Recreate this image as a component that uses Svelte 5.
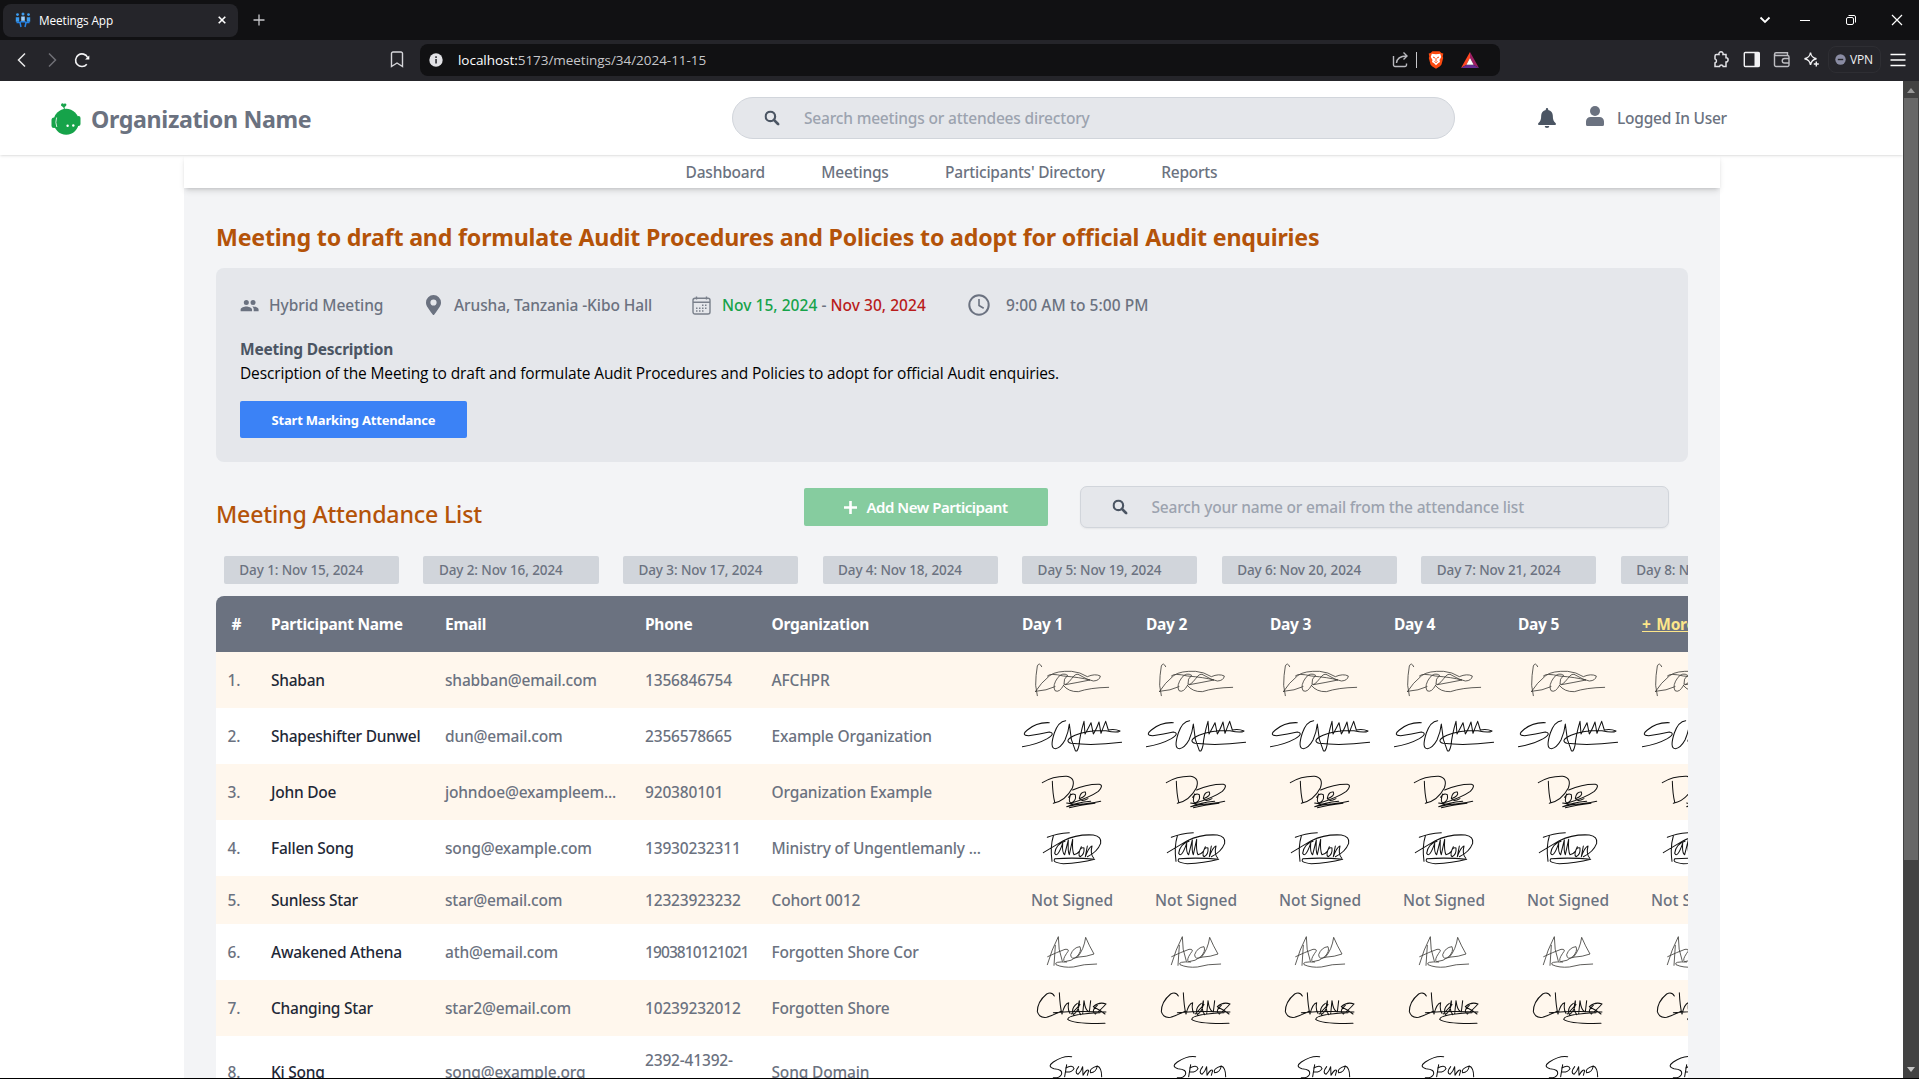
<script>
  const navLinks = ['Dashboard', 'Meetings', "Participants' Directory", 'Reports'];
  const days = Array.from({ length: 8 }, (_, i) => `Day ${i + 1}: Nov ${15 + i}, 2024`);
  const dayHeads = ['Day 1', 'Day 2', 'Day 3', 'Day 4', 'Day 5'];
  const columns = [0, 1, 2, 3, 4, 5];

  const signatures = {
    kaze: 'M125 44Q118 29 112 42Q107 70 107 100L112 131M106 119Q122 93 150 70Q170 56 215 58Q240 60 262 74Q285 64 301 72Q299 86 280 87Q262 84 240 70Q228 60 215 80Q198 102 192 96Q190 80 203 70Q188 60 174 76Q156 100 165 116Q178 124 192 98M142 72Q150 62 190 72Q240 76 270 84Q230 92 196 98M107 118Q140 116 165 104M190 100Q205 120 235 119Q270 107 326 106',
    scam: 'M148 44Q110 42 82 66Q62 82 86 83Q120 78 148 72Q168 76 142 92Q110 110 67 116M197 38Q175 40 163 75Q148 122 166 122Q182 120 195 96Q206 70 208 48L214 94L226 128Q232 134 237 112Q240 80 252 40L255 78Q262 66 273 44L280 78Q288 66 297 42L303 76Q308 62 317 40L325 66Q344 62 360 69Q350 76 318 68Q262 66 225 82Q190 98 213 106Q280 114 365 103',
    doe: 'M127 56Q160 36 200 37Q228 42 217 72Q197 110 160 118M157 52Q158 90 164 114M218 78Q260 60 298 61Q312 64 295 82Q270 100 212 118M212 90Q204 112 212 117Q230 112 226 92Q214 86 206 100M238 104Q262 96 256 84Q242 82 238 102Q242 116 264 104M200 117Q240 126 302 112M272 112Q230 116 200 128Q250 118 285 118Q240 124 208 131',
    fallen: 'M142 52Q170 40 208 38M160 48Q150 80 156 124M130 98Q150 86 190 62Q230 42 280 45Q306 50 302 70Q292 96 262 110M195 64Q168 72 164 100Q172 116 188 70Q186 100 194 104L205 60Q203 96 208 104L218 58Q216 94 222 104Q230 104 238 94M244 80Q232 104 240 110Q254 104 252 84Q244 80 238 94M262 78L256 110Q266 82 276 78Q270 102 281 114M165 116Q154 128 190 131Q240 130 284 118Q230 112 165 116',
    athena: 'M142 122Q155 76 175 38Q174 76 187 112M143 98Q170 85 195 76Q212 74 200 88Q186 108 194 113Q214 112 230 98Q246 82 240 68Q220 70 212 92Q212 108 232 100Q252 76 257 40Q268 66 282 90Q262 98 230 100M166 64L162 124M200 114Q160 112 168 122Q190 132 220 129Q250 120 290 120',
    changing: 'M163 48Q155 34 140 42Q112 65 112 95Q118 115 140 112Q168 102 182 94M178 38Q180 80 186 102Q194 70 206 68Q202 90 210 100M232 70Q212 84 220 104Q240 90 238 62Q230 90 242 104M248 102L252 62Q256 94 268 96L272 62M292 76Q272 92 286 102Q300 92 318 72Q298 64 280 80Q300 90 315 102M160 98Q230 92 318 96M214 102L240 74M300 98Q205 102 203 118Q220 132 315 130',
    song: 'M215 62Q190 58 160 78Q140 92 162 98Q190 100 184 116Q176 128 160 125M200 86L194 122M197 96Q218 84 222 98Q214 110 198 108M236 92Q222 110 234 115Q244 106 248 92L249 118Q262 96 266 104L262 118M292 90Q266 98 272 110Q288 110 292 90Q305 95 305 122'
  };

  const people = [
    { name: 'Shaban', email: 'shabban@email.com', phone: '1356846754', org: 'AFCHPR', sig: 'kaze', tone: 'light' },
    { name: 'Shapeshifter Dunwel', email: 'dun@email.com', phone: '2356578665', org: 'Example Organization', sig: 'scam', tone: 'dark' },
    { name: 'John Doe', email: 'johndoe@exampleem...', phone: '920380101', org: 'Organization Example', sig: 'doe', tone: 'dark' },
    { name: 'Fallen Song', email: 'song@example.com', phone: '13930232311', org: 'Ministry of Ungentlemanly ...', sig: 'fallen', tone: 'dark' },
    { name: 'Sunless Star', email: 'star@email.com', phone: '12323923232', org: 'Cohort 0012', sig: null, tone: '' },
    { name: 'Awakened Athena', email: 'ath@email.com', phone: '1903810121021', org: 'Forgotten Shore Cor', sig: 'athena', tone: 'light' },
    { name: 'Changing Star', email: 'star2@email.com', phone: '10239232012', org: 'Forgotten Shore', sig: 'changing', tone: 'dark' },
    { name: 'Ki Song', email: 'song@example.org', phone: '2392-41392-1231', org: 'Song Domain', sig: 'song', tone: 'dark' }
  ];
</script>

{#snippet magnifier()}
  <svg class="magnifier" viewBox="0 0 16 16" width="16" height="16" fill="none" stroke="#4b5563">
    <circle cx="6.3" cy="6.3" r="5" stroke-width="2.3" />
    <path d="M10 10l4.6 4.6" stroke-width="2.8" stroke-linecap="round" />
  </svg>
{/snippet}

<div class="window">
  <div class="tabbar">
    <div class="tab">
      <svg width="16" height="16" viewBox="0 0 16 16" fill="#3b9cf0">
        <circle cx="2.500" cy="2.600" r="1.400" /><circle cx="8" cy="2" r="1.500" /><circle cx="13.500" cy="2.600" r="1.400" />
        <path d="M.8 5.200h3.400v4.600H.8zM11.800 5.200h3.400v4.600h-3.400z" />
        <path d="M6.200 4.500h3.600v4.300H6.200z" fill="#9fd2ff" />
        <path d="M1.500 10.500h3.500l1 4.500M14.500 10.500H11l-1 4.500M5.500 9.800h5" stroke="#2583e6" stroke-width="1.500" fill="none" />
      </svg>
      <span class="tab-title">Meetings App</span>
      <svg class="tab-close" width="8" height="8" viewBox="0 0 8 8" stroke="#fff" stroke-width="1.600"><path d="M.7.7l6.600 6.600M7.300.7L.7 7.300" /></svg>
    </div>
    <svg class="new-tab" width="12" height="12" viewBox="0 0 12 12" stroke="#c8c8cc" stroke-width="1.300"><path d="M6 .5v11M.5 6h11" /></svg>
    <div class="window-buttons">
      <svg width="12" height="12" viewBox="0 0 12 12" fill="none" stroke="#fff" stroke-width="1.800"><path d="M1.500 3.500L6 8l4.500-4.500" /></svg>
      <svg width="12" height="12" viewBox="0 0 12 12" stroke="#fff"><path d="M1 6.500h10" /></svg>
      <svg width="12" height="12" viewBox="0 0 12 12" fill="none" stroke="#fff"><rect x="1.500" y="3.500" width="7" height="7" rx="1.500" /><path d="M3.500 1.500h5.500a1.500 1.500 0 0 1 1.500 1.500v5.500" /></svg>
      <svg width="12" height="12" viewBox="0 0 12 12" stroke="#fff" stroke-width="1.200"><path d="M1 1l10 10M11 1L1 11" /></svg>
    </div>
  </div>

  <div class="toolbar">
    <svg class="back" width="10" height="16" viewBox="0 0 10 16" fill="none" stroke="#e8e8ea" stroke-width="1.500"><path d="M8 1.500L1.500 8 8 14.500" /></svg>
    <svg class="forward" width="10" height="16" viewBox="0 0 10 16" fill="none" stroke="#6f6f76" stroke-width="1.500"><path d="M2 1.500L8.500 8 2 14.500" /></svg>
    <svg class="reload" width="16" height="16" viewBox="0 0 16 16" fill="none" stroke="#f2f2f4" stroke-width="1.600"><path d="M12.800 12.200A6.300 6.300 0 1 1 13.600 5.500" /><path d="M15.300 3.400v4.200h-4.200z" fill="#fff" stroke="none" /></svg>
    <svg class="bookmark" width="14" height="17" viewBox="0 0 14 17" fill="none" stroke="#d6d6da" stroke-width="1.400"><path d="M1.500 2.500a1.500 1.500 0 0 1 1.500-1.500h8a1.500 1.500 0 0 1 1.500 1.500v13L7 12l-5.500 3.500z" /></svg>
    <div class="address">
      <svg width="14" height="14" viewBox="0 0 14 14"><circle cx="7" cy="7" r="6.700" fill="#e2e2e6" /><path d="M6.200 6h1.700v4.500H6.200zM6.200 3.300h1.700v1.600H6.200z" fill="#3a3a3f" /></svg>
      <span class="url"><b>localhost:</b>5173/meetings/34/2024-11-15</span>
      <svg class="share" width="17" height="17" viewBox="0 0 17 17" fill="none" stroke="#b9b9be" stroke-width="1.400"><path d="M1.500 5v9a1.500 1.500 0 0 0 1.500 1.500h10a1.500 1.500 0 0 0 1.500-1.500v-1.500" /><path d="M4.500 12c.3-4 3-6.800 10-7M11.500 1.500L15 5l-3.500 3.500" /></svg>
      <i class="divider"></i>
      <svg class="lion" width="16" height="18" viewBox="0 0 16 18"><path d="M4.500.3h7L13.400 2l1.900.6-.6 3 .5 1.400-1.700 6.500-1.500 1.700L8 17.800l-4-2.600-1.500-1.700L.8 7l.5-1.400-.6-3L2.600 2z" fill="#fb4a10" /><path d="M8 3.200l4.200-.5 1 3.300-1.700 3 .5 2-2 1.200L8 14.200l-2-2-2-1.200.5-2-1.700-3 1-3.300z" fill="#fff" /><path d="M5 6l2 1M11 6L9 7M8 7v3M6.500 10.500L8 11.500l1.500-1" stroke="#fb4a10" stroke-width="1" fill="none" /></svg>
      <svg class="bat" width="18" height="16" viewBox="0 0 18 16"><path d="M9 0L0 16l5.500-3.200L9 6z" fill="#ff4724" /><path d="M9 0l9 16-5.500-3.200L9 6z" fill="#9e1f63" /><path d="M0 16h18l-5.500-3.200h-7z" fill="#662d91" /><path d="M9 6l3.600 6.700H5.400z" fill="#fff" /></svg>
    </div>
    <div class="extensions">
      <svg width="17" height="17" viewBox="0 0 17 17" fill="none" stroke="#e2e2e6" stroke-width="1.500"><path d="M3.500 3.500H6a2.100 2.100 0 1 1 4 0h3v3.300a2.100 2.100 0 1 1 0 4.200v4.500h-2.800a1.900 1.900 0 0 0-3.700 0H2v-3.600a2.100 2.100 0 0 0 0-4V5A1.500 1.500 0 0 1 3.500 3.500z" /></svg>
      <svg width="17" height="17" viewBox="0 0 17 17"><rect x="1.300" y="1.500" width="15" height="14" rx="1" fill="none" stroke="#f2f2f4" stroke-width="1.400" /><path d="M11.500 1.500h5v14h-5z" fill="#f2f2f4" /></svg>
      <svg width="17" height="17" viewBox="0 0 17 17" fill="none" stroke="#bdbdc2" stroke-width="1.400"><path d="M1.500 3v11a1.500 1.500 0 0 0 1.500 1.500h11.500a1.500 1.500 0 0 0 1.500-1.500V6a1.500 1.500 0 0 0-1.500-1.500H3a1.400 1.400 0 0 1 0-2.800H14.500V4.500M16 7.500H11.500a2.200 2.200 0 0 0 0 4.500H16" /></svg>
      <svg width="17" height="17" viewBox="0 0 17 17" fill="none" stroke="#f2f2f4" stroke-width="1.400"><path d="M7.500 1.500c.7 4 2 5.500 6 6.300-4 .8-5.300 2.300-6 6.200-.7-4-2-5.400-6-6.200 4-.8 5.300-2.300 6-6.300z" /><path d="M13.300 10.500v5M10.800 13h5" /></svg>
    </div>
    <div class="vpn">
      <svg width="11" height="11" viewBox="0 0 11 11"><circle cx="5.500" cy="5.500" r="5.200" fill="#8a8ca3" /><path d="M2.800 5.500h5.400" stroke="#25252a" stroke-width="1.400" /></svg>
      <span>VPN</span>
    </div>
    <svg class="menu" width="16" height="14" viewBox="0 0 16 14" stroke="#fff" stroke-width="1.300"><path d="M.5 1.500h15M.5 7h15M.5 12.500h15" /></svg>
  </div>

  <div class="viewport">
    <div class="page">
      <header>
        <svg class="logo" width="30" height="32" viewBox="0 0 30 32" fill="#16a34a">
          <ellipse cx="15.200" cy="18.800" rx="12.600" ry="13" />
          <rect x=".5" y="14.500" width="5" height="10.500" rx="2.500" /><rect x="25.500" y="13" width="4" height="10" rx="2" />
          <path d="M13.500 6.500l-1-4.500" stroke="#16a34a" stroke-width="1" /><circle cx="11.500" cy="1.800" r="1.500" /><circle cx="14" cy="1.800" r="1.400" /><path d="M10.200 2.500h5.100l-2.500 2.300z" />
          <path d="M5.600 14.500q-1.600 5 .2 9.500" stroke="#fff" stroke-width=".8" fill="none" />
          <circle cx="16.600" cy="22.800" r="1.200" fill="#fff" /><circle cx="22.300" cy="22.500" r="1.200" fill="#fff" />
        </svg>
        <h1>Organization Name</h1>
        <div class="directory-search">{@render magnifier()}<span>Search meetings or attendees directory</span></div>
        <svg class="bell" width="18" height="20" viewBox="0 0 18 20" fill="#4b5563"><path d="M9 0a1.200 1.200 0 0 1 1.200 1.200v.7c2.900.6 4.600 2.800 4.600 5.700 0 4.200.9 5.800 2.700 7.400.9.900.3 2-.7 2H1.200c-1 0-1.600-1.100-.7-2 1.800-1.600 2.700-3.200 2.700-7.400 0-2.900 1.700-5.100 4.600-5.700v-.7A1.200 1.200 0 0 1 9 0zM6.700 17.900h4.600a2.300 2.100 0 0 1-4.600 0z" /></svg>
        <svg class="avatar" width="18" height="20" viewBox="0 0 18 20" fill="#6b7280"><circle cx="9" cy="5" r="5" /><path d="M4.500 11h9A4.500 4.500 0 0 1 18 15.500v3a1.500 1.500 0 0 1-1.500 1.500h-15A1.500 1.500 0 0 1 0 18.500v-3A4.500 4.500 0 0 1 4.500 11z" /></svg>
        <span class="user">Logged In User</span>
      </header>

      <main>
        <nav>
          {#each navLinks as link}<span>{link}</span>{/each}
        </nav>

        <div class="content">
          <h2>Meeting to draft and formulate Audit Procedures and Policies to adopt for official Audit enquiries</h2>

          <section class="card">
            <div class="meta">
              <div class="meta-item kind">
                <svg width="19" height="19" viewBox="0 0 24 24" fill="#6b7280"><path d="M16.500 11.500a3.200 3.200 0 1 0 0-6.400 3.200 3.200 0 0 0 0 6.400zm-8.500 0a3.200 3.200 0 1 0 0-6.400 3.200 3.200 0 0 0 0 6.400zm0 1.700c-2.500 0-7.200 1.300-7.200 3.800v2.300h14.400V17c0-2.500-4.700-3.800-7.200-3.800zm8.300 0l-.9.100c1.100.8 1.900 2 1.900 3.700v2.300h6.200V17c0-2.500-4.700-3.800-7.200-3.800z" /></svg>
                <span>Hybrid Meeting</span>
              </div>
              <div class="meta-item place">
                <svg width="15" height="20" viewBox="0 0 15 20" fill="#6b7280" fill-rule="evenodd"><path d="M6.700 19.600C1 11.500 0 10.600 0 7.500a7.500 7.500 0 0 1 15 0c0 3.100-1 4-6.700 12.100a1 1 0 0 1-1.600 0zM7.500 10.600a3.100 3.100 0 1 0 0-6.200 3.100 3.100 0 0 0 0 6.200z" /></svg>
                <span>Arusha, Tanzania -Kibo Hall</span>
              </div>
              <div class="meta-item dates">
                <svg width="19" height="19" viewBox="0 0 19 19" fill="none" stroke="#7a808b" stroke-width="1.400"><rect x="1" y="2.300" width="17" height="15.700" rx="2" /><path d="M1 6.200h17M4.500.5v3M14.500.5v3" /><path d="M10 9.300h6M4 12.200h12M4 15.100h9" stroke-dasharray="1.500 1.500" stroke-width="1.500" /></svg>
                <span><em class="from">Nov 15, 2024</em> - <em class="to">Nov 30, 2024</em></span>
              </div>
              <div class="meta-item time">
                <svg width="22" height="22" viewBox="0 0 22 22" fill="none" stroke="#6b7280" stroke-width="2"><circle cx="11" cy="11" r="9.700" /><path d="M11 5v6.500l4.700 2.800" stroke-width="1.600" /></svg>
                <span>9:00 AM to 5:00 PM</span>
              </div>
            </div>
            <h3>Meeting Description</h3>
            <p>Description of the Meeting to draft and formulate Audit Procedures and Policies to adopt for official Audit enquiries.</p>
            <button class="start">Start Marking Attendance</button>
          </section>

          <div class="list-head">
            <h4>Meeting Attendance List</h4>
            <button class="add"><svg width="13" height="13" viewBox="0 0 13 13" stroke="#fff" stroke-width="2.600"><path d="M6.500 0v13M0 6.500h13" /></svg><span>Add New Participant</span></button>
            <div class="list-search">{@render magnifier()}<span>Search your name or email from the attendance list</span></div>
          </div>

          <div class="days">
            {#each days as day}<div class="chip">{day}</div>{/each}
          </div>

          <div class="table">
            <div class="row head">
              <span class="num">#</span><span>Participant Name</span><span>Email</span><span>Phone</span><span>Organization</span>
              {#each dayHeads as day}<span>{day}</span>{/each}
              <span class="more">+ More</span>
            </div>
            {#each people as person, i}
              <div class={['row', { odd: i % 2 === 0, unsigned: !person.sig, tall: i === 7 }]}>
                <span class="num">{i + 1}.</span>
                <span class="name">{person.name}</span>
                <span>{person.email}</span>
                <span class={['phone', { long: person.phone.length === 13 }]}>{person.phone}</span>
                <span>{person.org}</span>
                {#each columns as col (col)}
                  {#if person.sig}
                    <svg class={['signature', person.tone]} viewBox="66 0 300 168" width="100" height="56"><path d={signatures[person.sig]} /></svg>
                  {:else}
                    <span class="unsigned-label">Not Signed</span>
                  {/if}
                {/each}
              </div>
            {/each}
          </div>
        </div>
      </main>
    </div>

    <div class="scrollbar">
      <svg width="8" height="5" viewBox="0 0 8 5" fill="#9a9a9a"><path d="M4 0l4 5H0z" /></svg>
      <div class="thumb"></div>
      <svg width="8" height="5" viewBox="0 0 8 5" fill="#c4c4c4"><path d="M4 5l4-5H0z" /></svg>
    </div>
  </div>
</div>

<style>
  :global(body) { margin: 0; background: #fff; }
  .window {
    width: 1919px; height: 1079px; box-sizing: border-box; overflow: hidden;
    display: flex; flex-direction: column; border-bottom: 1px solid #000;
    font: 500 15.5px/24px 'Noto Sans', 'Open Sans', sans-serif; letter-spacing: -0.18px; color: #6b7280;
  }
  svg { display: block; flex: none; }
  span, h1, h2, h3, h4 { white-space: nowrap; }
  h1, h2, h3, h4, p { margin: 0; }

  .tabbar { height: 40px; flex: none; display: flex; align-items: center; background: #111113; }
  .tab { width: 235px; height: 33px; margin-left: 3px; border-radius: 8px; background: #25252a; display: flex; align-items: center; box-sizing: border-box; padding: 0 12px; }
  .tab-title { margin-left: 8px; font: 400 11.8px/16px 'Open Sans', sans-serif; letter-spacing: -0.1px; color: #fff; }
  .tab-close { margin-left: auto; }
  .new-tab { margin-left: 15px; }
  .window-buttons { margin-left: auto; display: grid; grid-template-columns: 40px 46px 46px 18px; padding-right: 10px; }

  .toolbar { height: 41px; flex: none; display: flex; align-items: center; background: #25252a; box-sizing: border-box; padding-bottom: 2px; }
  .back { margin-left: 17px; }
  .forward { margin-left: 20px; }
  .reload { margin-left: 17px; }
  .bookmark { margin-left: 300px; }
  .address { width: 1080px; height: 32px; margin-left: 16px; box-sizing: border-box; padding: 0 21px 0 9px; background: #111113; border-radius: 8px; display: flex; align-items: center; }
  .url { margin-left: 15px; font: 400 13.5px/20px 'Open Sans', sans-serif; letter-spacing: -0.04px; color: #c6c6ca; }
  .url b { font-weight: 400; color: #fff; }
  .share { margin-left: auto; }
  .divider { width: 1px; height: 16px; margin-left: 7px; background: #c8c8cc; }
  .lion { margin-left: 11px; }
  .bat { margin-left: 17px; }
  .extensions { display: flex; gap: 13px; margin-left: 213px; }
  .vpn { width: 53px; height: 27px; margin-left: 8px; border: 1px solid #2e2e33; border-radius: 8px; display: flex; align-items: center; gap: 4px; box-sizing: border-box; padding-left: 6px; font: 400 12px/16px 'Open Sans', sans-serif; letter-spacing: -0.2px; color: #f0f0f2; }
  .menu { margin-left: 9px; }

  .viewport { flex: 1; min-height: 0; display: flex; }
  .page { width: 1903px; overflow: hidden; background: #fff; }
  .scrollbar { flex: 1; background: #424242; display: flex; flex-direction: column; align-items: center; justify-content: space-between; padding: 7px 0 6px; box-sizing: border-box; }
  .thumb { width: 14px; height: 762px; margin: 5px 0 auto; background: #686868; }

  header { position: relative; height: 74px; display: flex; align-items: center; box-shadow: 0 1px 3px rgb(0 0 0 / 0.1), 0 1px 2px -1px rgb(0 0 0 / 0.1); box-sizing: border-box; }
  .logo { margin: 1px 0 0 51px; }
  h1 { width: 641px; margin: 1px 0 0 10px; font-size: 23.2px; font-weight: 700; line-height: 32px; letter-spacing: -0.35px; color: #6b7280; }
  .directory-search { width: 723px; height: 42px; box-sizing: border-box; padding: 0 31px; border: 1px solid #d1d5db; border-radius: 21px; background: #e5e7eb; color: #9ca3af; display: flex; align-items: center; }
  .directory-search span { margin-left: 24px; }
  .bell { margin-left: 83px; }
  .avatar { margin: -4px 0 0 30px; }
  .user { margin-left: 13px; letter-spacing: -0.23px; }

  main { width: 1536px; margin: 0 auto 0 184px; background: #f3f4f6; height: 940px; }
  nav { height: 33px; display: flex; justify-content: center; gap: 56.5px; padding-right: 1px; line-height: 34px; letter-spacing: -0.22px; background: #fff; box-shadow: 0 4px 6px -1px rgb(0 0 0 / 0.12), 0 2px 4px -2px rgb(0 0 0 / 0.16); }
  .content { padding: 32px 32px 0; }
  h2 { font-size: 23.2px; font-weight: 700; line-height: 34px; letter-spacing: -0.19px; color: #b45309; }

  .card { height: 194px; margin-top: 14px; box-sizing: border-box; padding: 24px; border-radius: 8px; background: #e5e7eb; }
  .meta { display: flex; height: 26px; }
  .meta-item { display: flex; align-items: center; }
  .kind { width: 186px; gap: 10px; letter-spacing: -0.06px; }
  .place { width: 266px; gap: 13px; letter-spacing: -0.1px; }
  .dates { width: 276px; gap: 11px; letter-spacing: 0.04px; }
  .time { gap: 16px; letter-spacing: 0.08px; }
  em { font-style: normal; }
  .from { color: #16a34a; }
  .to { color: #b91c1c; }
  h3 { margin-top: 19px; font-size: 15.5px; font-weight: 700; line-height: 24px; letter-spacing: -0.22px; color: #4b5563; }
  p { font: 400 15.5px/24px 'Open Sans', sans-serif; letter-spacing: -0.135px; color: #000; }
  button { border: 0; padding: 0; color: #fff; border-radius: 2px; font-family: 'Noto Sans', sans-serif; }
  .start { display: block; width: 227px; height: 37px; margin-top: 16px; background: #3b82f6; font-size: 13px; font-weight: 700; letter-spacing: -0.2px; }

  .list-head { display: flex; align-items: center; height: 42px; margin-top: 24px; }
  h4 { width: 588px; padding-top: 13px; font-size: 23.2px; font-weight: 500; line-height: 32px; letter-spacing: -0.2px; color: #b45309; }
  .add { width: 244px; height: 38px; display: flex; align-items: center; justify-content: center; gap: 9px; background: #86cc9f; font-size: 15px; font-weight: 600; letter-spacing: -0.46px; }
  .list-search { width: 589px; height: 42px; margin-left: 32px; box-sizing: border-box; padding: 0 31px; border: 1px solid #d1d5db; border-radius: 7px; background: #e5e7eb; box-shadow: 0 1px 2px rgb(0 0 0 / 0.06); color: #9ca3af; display: flex; align-items: center; }
  .list-search span { margin-left: 23.5px; }
  .magnifier { transform: scale(0.95); }

  .days { display: flex; gap: 24.4px; margin: 28px 0 12px; padding-left: 7.8px; overflow: hidden; }
  .chip { flex: none; width: 175.2px; height: 28px; box-sizing: border-box; padding-left: 15.5px; border-radius: 2px; background: #d1d5db; font-size: 13.5px; line-height: 28px; letter-spacing: -0.1px; }

  .table { overflow: hidden; border-radius: 8px 0 0 0; }
  .row { width: 1670px; height: 56px; display: grid; grid-template-columns: 55px 174px 200px 126.5px 250.5px repeat(6, 124px); align-items: center; background: #fff; letter-spacing: -0.17px; }
  .row.odd { background: #fff7ed; }
  .row.unsigned { height: 48px; }
  .row.tall { height: 72px; }
  .row.head { background: #6b7280; color: #fff; font-weight: 700; letter-spacing: -0.27px; }
  .num { padding-left: 11.5px; }
  .head .num { padding-left: 15.5px; }
  .name { color: #1f2937; letter-spacing: -0.26px; }
  .phone { width: 106px; white-space: normal; }
  .phone.long { letter-spacing: -0.9px; }
  .more { color: #fde68a; text-decoration: underline; word-spacing: 2px; }
  .unsigned-label { padding-left: 9px; letter-spacing: 0; }
  .signature { fill: none; stroke-linecap: round; stroke-linejoin: round; }
  .tall .signature { align-self: start; }
  .signature.dark { stroke: #111; stroke-width: 3.1; }
  .signature.light { stroke: #3f3d3a; stroke-width: 2.5; }
</style>
